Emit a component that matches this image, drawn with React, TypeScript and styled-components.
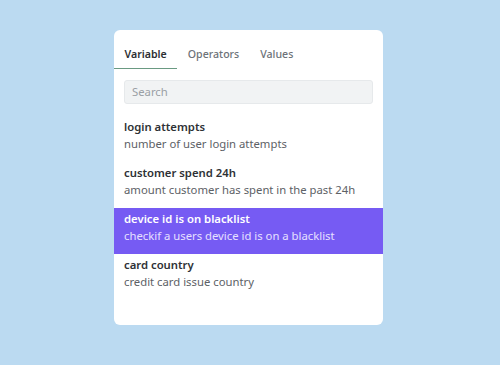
import React from "react";
import styled, { createGlobalStyle } from "styled-components";

const Global = createGlobalStyle`
  html, body { margin: 0; padding: 0; }
  body {
    background: #bbdaf1;
    font-family: "Noto Sans", "Open Sans", sans-serif;
    width: 500px;
    height: 365px;
    overflow: hidden;
  }
`;

const Page = styled.div`
  display: flex;
  justify-content: flex-start;
  padding-top: 30px;
  padding-left: 114px;
`;

const Card = styled.div`
  width: 269px;
  height: 295px;
  background: #ffffff;
  border-radius: 6px;
  box-sizing: border-box;
  display: flex;
  flex-direction: column;
  overflow: hidden;
`;

const Tabs = styled.div`
  display: flex;
  margin-top: 15px;
  height: 24px;
`;

const Tab = styled.div<{ $active?: boolean }>`
  padding: 0 10.5px;
  font-size: 10.6px;
  line-height: 18px;
  font-weight: ${(p) => (p.$active ? 600 : 500)};
  color: ${(p) => (p.$active ? "#2c2f33" : "#6d7278")};
  border-bottom: 1.5px solid ${(p) => (p.$active ? "#6a9a82" : "transparent")};
  box-sizing: border-box;
  height: 24px;
`;

const Search = styled.div`
  margin: 11px 10px 0 10px;
  height: 24px;
  box-sizing: border-box;
  background: #f1f3f4;
  border: 1px solid #e6e9eb;
  border-radius: 3px;
  padding-left: 7px;
  font-size: 11.3px;
  line-height: 22px;
  color: #9aa0a5;
`;

const List = styled.div`
  margin-top: 12px;
  display: flex;
  flex-direction: column;
`;

const Item = styled.div<{ $selected?: boolean }>`
  height: 46px;
  box-sizing: border-box;
  padding: 3px 10px 0 10px;
  background: ${(p) => (p.$selected ? "#765bf3" : "transparent")};
`;

const Title = styled.div<{ $selected?: boolean }>`
  font-size: 11.3px;
  line-height: 16px;
  font-weight: 600;
  color: ${(p) => (p.$selected ? "#ffffff" : "#2e3135")};
`;

const Desc = styled.div<{ $selected?: boolean }>`
  font-size: 11.3px;
  line-height: 17px;
  color: ${(p) => (p.$selected ? "#e6e0ff" : "#5d6166")};
`;

const items = [
  { t: "login attempts", d: "number of user login attempts" },
  { t: "customer spend 24h", d: "amount customer has spent in the past 24h" },
  { t: "device id is on blacklist", d: "checkif a users device id is on a blacklist", s: true },
  { t: "card country", d: "credit card issue country" },
];

export default function App() {
  return (
    <>
      <Global />
      <Page>
        <Card>
          <Tabs>
            <Tab $active>Variable</Tab>
            <Tab>Operators</Tab>
            <Tab>Values</Tab>
          </Tabs>
          <Search>Search</Search>
          <List>
            {items.map((it) => (
              <Item key={it.t} $selected={it.s}>
                <Title $selected={it.s}>{it.t}</Title>
                <Desc $selected={it.s}>{it.d}</Desc>
              </Item>
            ))}
          </List>
        </Card>
      </Page>
    </>
  );
}
